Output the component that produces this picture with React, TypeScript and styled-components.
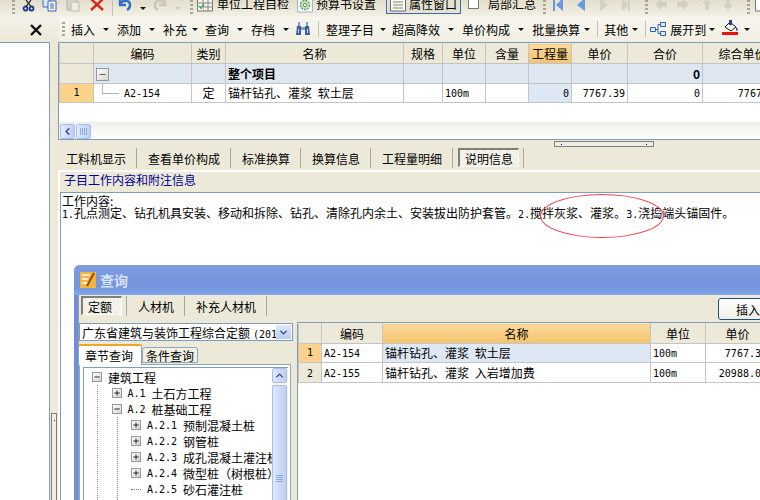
import React from 'react'
import styled, { createGlobalStyle } from 'styled-components'
import { Minus, Plus, ChevronDown, ChevronUp, ChevronLeft } from 'lucide-react'

const GlobalStyle = createGlobalStyle`
  html, body {
    margin: 0;
    padding: 0;
    background: #ece9d8;
  }
  * {
    box-sizing: border-box;
  }
`

const cjk = `"Noto Sans CJK SC", "Liberation Sans", sans-serif`
const mono = `"DejaVu Sans Mono", "Liberation Mono", monospace`

interface Column {
  title: string
  width: number
  hot?: boolean
}

const mainColumns: Column[] = [
  { title: '', width: 34 },
  { title: '编码', width: 98 },
  { title: '类别', width: 34 },
  { title: '名称', width: 178 },
  { title: '规格', width: 39 },
  { title: '单位', width: 43 },
  { title: '含量', width: 43 },
  { title: '工程量', width: 43, hot: true },
  { title: '单价', width: 56 },
  { title: '合价', width: 75 },
  { title: '综合单价', width: 80 },
]

const resultColumns: Column[] = [
  { title: '', width: 23 },
  { title: '编码', width: 61 },
  { title: '名称', width: 268, hot: true },
  { title: '单位', width: 55 },
  { title: '单价', width: 64 },
]

const resultRows = [
  { no: '1', code: 'A2-154', name: '锚杆钻孔、灌浆 软土层', unit: '100m', price: '7767.39', selected: true },
  { no: '2', code: 'A2-155', name: '锚杆钻孔、灌浆 入岩增加费', unit: '100m', price: '20988.03', selected: false },
]

const treeRows = [
  { depth: 0, mark: 'minus', label: '建筑工程' },
  { depth: 1, mark: 'plus', code: 'A.1', label: '土石方工程' },
  { depth: 1, mark: 'minus', code: 'A.2', label: '桩基础工程' },
  { depth: 2, mark: 'plus', code: 'A.2.1', label: '预制混凝土桩' },
  { depth: 2, mark: 'plus', code: 'A.2.2', label: '钢管桩' },
  { depth: 2, mark: 'plus', code: 'A.2.3', label: '成孔混凝土灌注桩' },
  { depth: 2, mark: 'plus', code: 'A.2.4', label: '微型桩（树根桩）' },
  { depth: 2, mark: 'none', code: 'A.2.5', label: '砂石灌注桩' },
  { depth: 2, mark: 'none', code: 'A.2.6', label: '灰土桩' },
]

const App: React.FC = () => (
  <Screen>
    <GlobalStyle />
    <TopBar>
      <Grip $ml={12} />
      <BarIcon $ml={5} viewBox="0 0 16 16">
        <circle cx="5.5" cy="8.5" r="2" fill="none" stroke="#1d3a8c" strokeWidth="1.8" />
        <circle cx="11.5" cy="8.5" r="2" fill="none" stroke="#1d3a8c" strokeWidth="1.8" />
        <path d="M6 6.5 11 0M11 6.5 6 0" stroke="#333" strokeWidth="1.3" />
      </BarIcon>
      <BarIcon $ml={6} viewBox="0 0 16 16">
        <path d="M1 -2h7v9H1z" fill="#dce8fb" stroke="#3b6fc0" />
        <path d="M6 1h8v10H6z" fill="#fff" stroke="#2f5fb0" />
        <path d="M8 4h4M8 6h4M8 8h4" stroke="#2f5fb0" />
      </BarIcon>
      <BarIcon $ml={7} viewBox="0 0 16 16">
        <path d="M2 -2h10v12H2z" fill="#d6d3c5" stroke="#b4b1a4" />
        <path d="M6 2h8v9H6z" fill="#eeece2" stroke="#bdbaae" />
      </BarIcon>
      <BarIcon $ml={8} viewBox="0 0 16 16">
        <path d="M2 -1 14 10M14 -1 2 10" stroke="#d8261c" strokeWidth="2.4" />
      </BarIcon>
      <BarLine $ml={7} />
      <BarIcon $ml={4} viewBox="0 0 16 16">
        <path d="M3 -2v7h6M3 4c3-5 10-4 10 1 0 2-1 4-3 5" fill="none" stroke="#3170c8" strokeWidth="2.4" />
      </BarIcon>
      <Caret $ml={7} />
      <BarIcon $ml={6} viewBox="0 0 16 16">
        <path d="M13 -2v7H7M13 4C10-1 3 0 3 5c0 2 1 4 3 5" fill="none" stroke="#c9c6ba" strokeWidth="2.4" />
      </BarIcon>
      <Caret $ml={7} $muted />
      <Grip $ml={9} />
      <BarIcon $ml={4} viewBox="0 0 16 16">
        <path d="M.5-1h15v12H.5z" fill="#f4f2ea" stroke="#777" />
        <path d="M.5 3h15M.5 7h15M6 -1v12M11 -1v12" stroke="#888" />
        <path d="M1 4h5v6H1z" fill="#fff" />
        <path d="M2 6l2 2 3-4" fill="none" stroke="#3da23a" strokeWidth="1.6" />
      </BarIcon>
      <TopLabel $ml={4}>单位工程自检</TopLabel>
      <BarIcon $ml={8} viewBox="0 0 16 16">
        <path d="M.5-2h15v14H.5z" fill="#f4f7fb" stroke="#9db4d8" />
        <circle cx="8" cy="5" r="4.5" fill="#cfe8c4" stroke="#5c9a56" strokeWidth="1.4" strokeDasharray="2 1" />
        <circle cx="8" cy="5" r="1.8" fill="#fff" stroke="#5c9a56" />
      </BarIcon>
      <TopLabel $ml={3}>预算书设置</TopLabel>
      <PressedButton>
        <BarIcon viewBox="0 0 16 16">
          <path d="M.5-2h15v13H.5z" fill="#fff" stroke="#666" />
          <path d="M3 2h10M3 5h10M3 8h10" stroke="#6b8a5c" />
        </BarIcon>
        <TopLabel $ml={3}>属性窗口</TopLabel>
      </PressedButton>
      <CheckMark />
      <TopLabel $ml={9}>局部汇总</TopLabel>
      <Grip $ml={7} />
      <BarIcon $ml={6} viewBox="0 0 16 16">
        <path d="M1 -2h2v13H1zM11 -2v13L4 5z" fill="#6b97dc" />
      </BarIcon>
      <BarIcon $ml={6} viewBox="0 0 16 16">
        <path d="M11 -2v13L3 5z" fill="#6b97dc" />
      </BarIcon>
      <BarIcon $ml={6} viewBox="0 0 16 16">
        <path d="M4 -2v13l8-6z" fill="#d3d0c4" />
      </BarIcon>
      <BarIcon $ml={6} viewBox="0 0 16 16">
        <path d="M12 -2h-2v13h2zM4 -2v13l7-6z" fill="#d3d0c4" />
      </BarIcon>
      <Grip $ml={11} />
      <BarIcon $ml={5} viewBox="0 0 16 16">
        <path d="M2 4 8-1v3h6v5H8v3z" fill="#d3d0c4" />
      </BarIcon>
      <BarIcon $ml={6} viewBox="0 0 16 16">
        <path d="M14 4 8-1v3H2v5h6v3z" fill="#d3d0c4" />
      </BarIcon>
      <BarIcon $ml={8} viewBox="0 0 16 16">
        <path d="M8 -1 13 4H10v6H6V4H3z" fill="#d3d0c4" />
      </BarIcon>
      <BarIcon $ml={5} viewBox="0 0 16 16">
        <path d="M8 10 13 5H10V-1H6v6H3z" fill="#d3d0c4" />
      </BarIcon>
      <Grip $ml={11} />
      <BarIcon $ml={5} viewBox="0 0 16 16">
        <path d="M.5-1h15v12H.5z" fill="#fff" stroke="#777" />
      </BarIcon>
    </TopBar>

    <SecondRow>
      <CloseSlot>
        <svg width="14" height="14" viewBox="0 0 14 14">
          <path d="M2 2 12 12M12 2 2 12" stroke="#111" strokeWidth="2.4" />
        </svg>
      </CloseSlot>
      <ActionBar>
        <Grip $ml={3} />
        <Action $ml={6}>插入</Action><Caret $ml={8} />
        <Action $ml={8}>添加</Action><Caret $ml={8} />
        <Action $ml={8}>补充</Action><Caret $ml={5} />
        <Action $ml={7}>查询</Action><Caret $ml={8} />
        <Action $ml={8}>存档</Action><Caret $ml={8} />
        <BarIcon $ml={6} viewBox="0 0 16 16">
          <path d="M2 5h4v9H1zM10 5h4l1 9h-5z" fill="#3d5fa8" />
          <path d="M3 1h2v4H3zM11 1h2v4h-2zM6 6h4v3H6z" fill="#7f9bd0" />
          <path d="M3 8h1v4H3zM12 8h1v4h-1z" fill="#c6d4ee" />
        </BarIcon>
        <BarLine $ml={7} />
        <Action $ml={7}>整理子目</Action><Caret $ml={6} />
        <Action $ml={6}>超高降效</Action><Caret $ml={8} />
        <Action $ml={8}>单价构成</Action><Caret $ml={8} />
        <Action $ml={8}>批量换算</Action><Caret $ml={4} />
        <BarLine $ml={7} />
        <Action $ml={6}>其他</Action><Caret $ml={4} />
        <BarLine $ml={7} />
        <BarIcon $ml={4} viewBox="0 0 16 16">
          <path d="M.5 6.5h5v4h-5zM10.5 1.500h5v4h-5zM10.5 10.500h5v4h-5z" fill="#dce8fb" stroke="#2f62b0" />
          <path d="M5.5 8.500h2.500v-5h2.500M8 8.500v4h2.500" fill="none" stroke="#2f62b0" />
        </BarIcon>
        <Action $ml={4}>展开到</Action><Caret $ml={3} />
        <PaintIcon viewBox="0 0 18 18">
          <path d="M3 7 8 2l6 5-5 4z" fill="#f3f1e8" stroke="#222" />
          <path d="M7 0h3v5H7z" fill="#27408b" />
          <path d="M14 7c2 1 2 4 1 4s-1-2-1-4z" fill="#27408b" />
          <path d="M0 12h16v3H0z" fill="#f01010" />
        </PaintIcon>
        <Caret $ml={4} />
      </ActionBar>
    </SecondRow>

    <Workspace>
      <LeftPane />
      <Gutter>
        <VHandle />
      </Gutter>
      <MainPane>
        <GridFrame>
          <GridTable>
            <colgroup>
              {mainColumns.map((col, i) => <col key={i} style={{ width: col.width }} />)}
            </colgroup>
            <thead>
              <tr>
                {mainColumns.map((col, i) => (
                  <HeadCell key={i} $hot={col.hot}>{col.title}</HeadCell>
                ))}
              </tr>
            </thead>
            <tbody>
              <tr>
                <HeadCell />
                <GroupCell><TreeBox $size={13}><Minus size={9} strokeWidth={1.6} /></TreeBox></GroupCell>
                <GroupCell />
                <GroupCell $bold>整个项目</GroupCell>
                <GroupCell />
                <GroupCell />
                <GroupCell />
                <GroupCell />
                <GroupCell />
                <GroupCell $bold $right>0</GroupCell>
                <GroupCell />
              </tr>
              <tr>
                <NumberCell>1</NumberCell>
                <Cell>
                  <TreeTick />
                  <CodeInTree>A2-154</CodeInTree>
                </Cell>
                <Cell $center>定</Cell>
                <Cell>锚杆钻孔、灌浆 软土层</Cell>
                <Cell />
                <Cell><Latin>100m</Latin></Cell>
                <Cell />
                <Cell $right $tint><Latin>0</Latin></Cell>
                <Cell $right><Latin>7767.39</Latin></Cell>
                <Cell $right><Latin>0</Latin></Cell>
                <Cell $right><Latin>7767.39</Latin></Cell>
              </tr>
            </tbody>
          </GridTable>
          <HScroll>
            <ScrollThumb><ChevronLeft size={11} strokeWidth={3} color="#2c4a8a" /></ScrollThumb>
            <ScrollThumb><GripBars /></ScrollThumb>
          </HScroll>
        </GridFrame>

        <SplitHandle />

        <TabStrip>
          <Tab>工料机显示</Tab>
          <Tab>查看单价构成</Tab>
          <Tab>标准换算</Tab>
          <Tab>换算信息</Tab>
          <Tab>工程量明细</Tab>
          <Tab $active><TabFace>说明信息</TabFace></Tab>
        </TabStrip>

        <NotePanel>
          <NoteTitle>子目工作内容和附注信息</NoteTitle>
          <NoteBody>
            工作内容:
            <br />
            <Latin>1.</Latin>孔点测定、钻孔机具安装、移动和拆除、钻孔、清除孔内余土、安装拔出防护套管。<Latin>2.</Latin>搅拌灰浆、灌浆。<Latin>3.</Latin>浇捣端头锚固件。
            <RedCircle />
          </NoteBody>
        </NotePanel>
      </MainPane>
    </Workspace>

    <Dialog>
      <DialogTitle>
        <svg width="16" height="16" viewBox="0 0 16 16">
          <path d="M0 0h16v16H0z" fill="#f3b63c" />
          <path d="M2 3h8M2 7h6M2 11h7" stroke="#fff" strokeWidth="1.5" />
          <path d="M14 1 7 14" stroke="#a8401c" strokeWidth="2" />
        </svg>
        查询
      </DialogTitle>
      <DialogBody>
        <DialogTabs>
          <Tab $active><TabFace>定额</TabFace></Tab>
          <Tab>人材机</Tab>
          <Tab>补充人材机</Tab>
          <InsertButton>插入</InsertButton>
        </DialogTabs>
        <DialogColumns>
          <TreeSide>
            <Combo>
              <ComboText>广东省建筑与装饰工程综合定额<ComboYear>(2018)</ComboYear></ComboText>
              <ComboArrow><ChevronDown size={11} strokeWidth={3} color="#2c4a8a" /></ComboArrow>
            </Combo>
            <TreeTabs>
              <TreeTab $active>章节查询</TreeTab>
              <TreeTab>条件查询</TreeTab>
            </TreeTabs>
            <TreeFrame>
              <TreeList>
                {treeRows.map((row, i) => (
                  <TreeRow key={i} $depth={row.depth}>
                    {row.mark === 'none' ? (
                      <TreeDash />
                    ) : (
                      <TreeBox $size={10}>
                        {row.mark === 'plus' ? <Plus size={8} strokeWidth={2.4} /> : <Minus size={8} strokeWidth={2.4} />}
                      </TreeBox>
                    )}
                    {row.code && <TreeCode>{row.code}</TreeCode>}
                    <TreeLabel>{row.label}</TreeLabel>
                  </TreeRow>
                ))}
              </TreeList>
              <VScroll>
                <ScrollBtn><ChevronUp size={11} strokeWidth={3} color="#2c4a8a" /></ScrollBtn>
                <VThumb><GripBarsFlat /></VThumb>
              </VScroll>
            </TreeFrame>
          </TreeSide>
          <ResultSide>
            <GridTable>
              <colgroup>
                {resultColumns.map((col, i) => <col key={i} style={{ width: col.width }} />)}
              </colgroup>
              <thead>
                <tr>
                  {resultColumns.map((col, i) => (
                    <HeadCell key={i} $hot={col.hot}>{col.title}</HeadCell>
                  ))}
                </tr>
              </thead>
              <tbody>
                {resultRows.map(row => (
                  <tr key={row.no}>
                    {row.selected ? <NumberCell>{row.no}</NumberCell> : <HeadCell><Latin>{row.no}</Latin></HeadCell>}
                    <Cell><Latin>{row.code}</Latin></Cell>
                    <Cell $tint={row.selected}>{row.name}</Cell>
                    <Cell><Latin>{row.unit}</Latin></Cell>
                    <Cell $right><Latin>{row.price}</Latin></Cell>
                  </tr>
                ))}
              </tbody>
            </GridTable>
          </ResultSide>
        </DialogColumns>
      </DialogBody>
    </Dialog>
  </Screen>
)

const Screen = styled.div`
  position: relative;
  width: 760px;
  height: 500px;
  overflow: hidden;
  background: #ece9d8;
  font-family: ${cjk};
  font-size: 12px;
  color: #000;
`

const TopBar = styled.div`
  display: flex;
  align-items: flex-start;
  height: 17px;
  overflow: hidden;
  background: linear-gradient(#e3dfcc, #f3f1e6);
  line-height: 12px;
`

const BarIcon = styled.svg<{ $ml?: number }>`
  width: 16px;
  height: 16px;
  flex: none;
  overflow: hidden;
  margin-left: ${props => props.$ml || 0}px;
`

const PaintIcon = styled.svg`
  width: 18px;
  height: 18px;
  flex: none;
  margin-left: 7px;
`

const Grip = styled.span<{ $ml: number }>`
  width: 3px;
  height: 14px;
  margin-left: ${props => props.$ml}px;
  flex: none;
  background: repeating-linear-gradient(#a8a595 0 2px, transparent 2px 4px);
`

const BarLine = styled.span<{ $ml: number }>`
  width: 1px;
  height: 16px;
  margin-left: ${props => props.$ml}px;
  flex: none;
  background: #c5c2b2;
`

const Caret = styled.span<{ $ml: number; $muted?: boolean }>`
  width: 0;
  height: 0;
  flex: none;
  margin-left: ${props => props.$ml}px;
  align-self: center;
  border-left: 3px solid transparent;
  border-right: 3px solid transparent;
  border-top: 3px solid ${props => (props.$muted ? '#c9c6ba' : '#111')};
`

const TopLabel = styled.span<{ $ml: number }>`
  margin-top: -2px;
  margin-left: ${props => props.$ml}px;
  white-space: nowrap;
  flex: none;
`

const PressedButton = styled.span`
  display: flex;
  flex: none;
  width: 75px;
  height: 14px;
  padding-left: 3px;
  margin-left: 10px;
  overflow: hidden;
  border: 1px solid #3d6ab0;
  border-top: 0;
  background: #e4e1d0;
`

const CheckMark = styled.span`
  width: 11px;
  height: 9px;
  margin-left: 7px;
  flex: none;
  border: 1px solid #777;
  border-top: 0;
  background: #fff;
`

const SecondRow = styled.div`
  display: flex;
  height: 25px;
  background: linear-gradient(#f4f2e8, #ebe8d8);
`

const CloseSlot = styled.div`
  width: 59px;
  display: flex;
  align-items: center;
  padding-left: 29px;
  flex: none;
`

const ActionBar = styled.div`
  display: flex;
  align-items: center;
  flex: 1;
  min-width: 0;
  padding-bottom: 1px;
  background: linear-gradient(#f8f7f0, #f1efe3);
  border-radius: 3px 0 0 3px;
  white-space: nowrap;
`

const Action = styled.span<{ $ml: number }>`
  margin-left: ${props => props.$ml}px;
  flex: none;
`

const Workspace = styled.div`
  display: flex;
  height: 458px;
`

const LeftPane = styled.div`
  width: 50px;
  flex: none;
  background: #fff;
  border-right: 1px solid #7f9db9;
  border-top: 1px solid #7f9db9;
`

const Gutter = styled.div`
  width: 8px;
  flex: none;
`

const VHandle = styled.div`
  width: 6px;
  height: 200px;
  margin: 371px 0 0 1px;
  border: 1px solid #808080;
  background: linear-gradient(#0000c0, #0000c0) 2px 6px / 1px 1px no-repeat, #f0eee4;
`

const MainPane = styled.div`
  flex: 1;
  min-width: 0;
  display: flex;
  flex-direction: column;
  overflow: hidden;
`

const GridFrame = styled.div`
  height: 98px;
  flex: none;
  overflow: hidden;
  background: #fff;
  border: 1px solid #7f9db9;
  border-right: 0;
  position: relative;
`

const GridTable = styled.table`
  table-layout: fixed;
  border-collapse: collapse;
  width: 0;
`

const HeadCell = styled.td<{ $hot?: boolean }>`
  height: 20px;
  padding: 0;
  text-align: center;
  font-weight: 400;
  overflow: hidden;
  white-space: nowrap;
  line-height: 12px;
  background: ${props => (props.$hot ? 'linear-gradient(#fbd99b, #f3c46b)' : '#ece9d8')};
  border: 1px solid #c4c4c4;
  border-top-color: #ece9d8;
`

const GroupCell = styled.td<{ $bold?: boolean; $right?: boolean }>`
  height: 19px;
  padding: 0 2px;
  overflow: hidden;
  white-space: nowrap;
  line-height: 12px;
  background: #dee6f0;
  font-weight: ${props => (props.$bold ? 700 : 400)};
  text-align: ${props => (props.$right ? 'right' : 'left')};
  border: 1px solid #c4c4c4;
`

const Cell = styled.td<{ $right?: boolean; $center?: boolean; $tint?: boolean }>`
  position: relative;
  height: 19px;
  padding: 0 2px;
  overflow: hidden;
  white-space: nowrap;
  line-height: 12px;
  word-spacing: 3px;
  background: ${props => (props.$tint ? '#dee8f5' : '#fff')};
  text-align: ${props => (props.$right ? 'right' : props.$center ? 'center' : 'left')};
  border: 1px solid #c4c4c4;
`

const NumberCell = styled.td`
  height: 19px;
  padding: 0;
  text-align: center;
  line-height: 12px;
  font-family: ${mono};
  font-size: 10px;
  background: #fdd28a;
  border: 1px solid #c4c4c4;
`

const Latin = styled.span`
  font-family: ${mono};
  font-size: 10px;
  color: #000;
`

const TreeBox = styled.span<{ $size: number }>`
  display: inline-flex;
  align-items: center;
  justify-content: center;
  width: ${props => props.$size}px;
  height: ${props => props.$size}px;
  flex: none;
  background: linear-gradient(135deg, #fff, #d8d5c8);
  border: 1px solid #8f9aa8;
  color: #000;
  vertical-align: middle;
`

const TreeTick = styled.span`
  position: absolute;
  left: 8px;
  top: 0;
  width: 17px;
  height: 10px;
  border-left: 1px solid #b4b4b4;
  border-bottom: 1px solid #b4b4b4;
`

const CodeInTree = styled(Latin)`
  margin-left: 28px;
`

const HScroll = styled.div`
  position: absolute;
  left: 0;
  right: 0;
  bottom: 0;
  height: 17px;
  display: flex;
  gap: 1px;
  padding: 1px;
  background: linear-gradient(#f0f0ea, #fff);
  border-top: 1px solid #eee;
`

const ScrollThumb = styled.span`
  width: 15px;
  height: 15px;
  display: flex;
  align-items: center;
  justify-content: center;
  background: linear-gradient(90deg, #e3ebfb, #bdcff3);
  border: 1px solid #a9bee8;
  border-radius: 2px;
`

const GripBars = styled.span`
  width: 7px;
  height: 7px;
  background: repeating-linear-gradient(90deg, #8ea8dc 0 1px, transparent 1px 2px);
`

const GripBarsFlat = styled.span`
  width: 7px;
  height: 7px;
  background: repeating-linear-gradient(#8ea8dc 0 1px, transparent 1px 2px);
`

const SplitHandle = styled.div`
  width: 100px;
  height: 6px;
  margin: 1px 0 0 496px;
  flex: none;
  border: 1px solid #808080;
  background:
    linear-gradient(#0000c0, #0000c0) 6px 2px / 1px 1px no-repeat,
    linear-gradient(#0000c0, #0000c0) 91px 2px / 1px 1px no-repeat,
    #f0eee4;
`

const TabStrip = styled.div`
  display: flex;
  height: 20px;
  margin: 1px 0 0 -3px;
  flex: none;
`

const Tab = styled.span<{ $active?: boolean }>`
  height: 20px;
  padding: ${props => (props.$active ? '0 4px 0 5px' : '0 10px 0 11px')};
  display: flex;
  align-items: center;
  flex: none;
  white-space: nowrap;
  border-right: 1px solid #aca899;
`

const TabFace = styled.span`
  height: 19px;
  min-width: 41px;
  align-self: flex-start;
  padding-left: 5px;
  padding-right: 5px;
  display: flex;
  align-items: center;
  border: 1px solid #fff;
  border-top: 2px solid #7f7f78;
  border-left: 2px solid #7f7f78;
  background: repeating-conic-gradient(#ece9d8 0 25%, #fff 0 50%) 0 0 / 2px 2px;
`

const NotePanel = styled.div`
  flex: 1;
  margin-top: 2px;
  padding: 2px 0 0 2px;
  background: #fff;
  display: flex;
  flex-direction: column;
`

const NoteTitle = styled.div`
  height: 20px;
  flex: none;
  padding-left: 4px;
  line-height: 16px;
  background: #ece9d8;
  color: #000090;
`

const NoteBody = styled.div`
  position: relative;
  flex: 1;
  background: #fff;
  border-top: 1px solid #7f9db9;
  border-left: 1px solid #7f9db9;
  padding: 2px 0 0 1px;
  line-height: 12px;
  white-space: nowrap;
`

const RedCircle = styled.span`
  position: absolute;
  left: 479px;
  top: 1px;
  width: 124px;
  height: 44px;
  border: 1px solid #f0404a;
  border-radius: 50%;
`

const Dialog = styled.div`
  position: absolute;
  left: 74px;
  top: 265px;
  width: 720px;
  height: 300px;
  border-radius: 6px 6px 0 0;
  background: #6f8fdc;
  padding-left: 4px;
`

const DialogTitle = styled.div`
  height: 30px;
  display: flex;
  align-items: center;
  gap: 4px;
  margin-left: -4px;
  padding-left: 6px;
  color: #d8e2f8;
  font-weight: 700;
  font-size: 14px;
  background: linear-gradient(#7f9ce0, #7394dd 70%, #82a8e8);
  border-radius: 6px 6px 0 0;
`

const DialogBody = styled.div`
  height: 100%;
  background: #ece9d8;
  border-left: 1px solid #9d9d9d;
`

const DialogTabs = styled.div`
  display: flex;
  align-items: flex-start;
  height: 28px;
  padding-top: 1px;
  margin-left: -3px;
`

const InsertButton = styled.button`
  width: 70px;
  height: 22px;
  margin: 2px 0 0 451px;
  flex: none;
  font: inherit;
  padding: 0 0 0 5px;
  text-align: left;
  text-indent: 12px;
  background: linear-gradient(#fff, #f0efe6);
  border: 1px solid #1f4f80;
  border-radius: 3px;
`

const DialogColumns = styled.div`
  display: flex;
  gap: 4px;
`

const TreeSide = styled.div`
  width: 214px;
  flex: none;
`

const Combo = styled.div`
  display: flex;
  align-items: center;
  height: 18px;
  background: #fff;
  border: 1px solid #7f9db9;
`

const ComboText = styled.span`
  flex: 1;
  min-width: 0;
  padding-left: 2px;
  overflow: hidden;
  white-space: nowrap;
`

const ComboYear = styled(Latin)`
  margin-left: 3px;
`

const ComboArrow = styled.span`
  width: 15px;
  height: 14px;
  margin-right: 1px;
  display: flex;
  align-items: center;
  justify-content: center;
  flex: none;
  background: linear-gradient(#dfe8fb, #b9ccf2);
`

const TreeTabs = styled.div`
  display: flex;
  align-items: flex-end;
  height: 20px;
  margin: 3px 0 0 -1px;
`

const TreeTab = styled.span<{ $active?: boolean }>`
  height: ${props => (props.$active ? '21px' : '16px')};
  margin-bottom: ${props => (props.$active ? '-1px' : '1px')};
  position: relative;
  padding: ${props => (props.$active ? '0 8px 0 6px' : '0 3px')};
  display: flex;
  align-items: center;
  white-space: nowrap;
  background: ${props => (props.$active ? '#fff' : '#f2f0e6')};
  border: 1px solid #91a7b4;
  border-top: ${props => (props.$active ? '2px solid #f4a51e' : '1px solid #91a7b4')};
  border-bottom: ${props => (props.$active ? '0' : '1px solid #91a7b4')};
  border-radius: 3px 3px 0 0;
`

const TreeFrame = styled.div`
  display: flex;
  width: 212px;
  height: 210px;
  padding: 2px 2px 2px 3px;
  background: #fff;
  border: 1px solid #91a7b4;
`

const TreeList = styled.div`
  flex: 1;
  min-width: 0;
  overflow: hidden;
  border: 1px solid #7f9db9;
  border-right: 0;
  padding-top: 1px;
`

const TreeRow = styled.div<{ $depth: number }>`
  display: flex;
  align-items: center;
  height: 16px;
  padding-left: ${props => 8 + props.$depth * 19.5}px;
  white-space: nowrap;
  background:
    ${props => (props.$depth >= 1 ? 'repeating-linear-gradient(#909090 0 1px, transparent 1px 2px) 13px 0 / 1px 100% no-repeat' : 'none')},
    ${props => (props.$depth >= 2 ? 'repeating-linear-gradient(#909090 0 1px, transparent 1px 2px) 33px 0 / 1px 100% no-repeat' : 'none')};
`

const TreeLabel = styled.span`
  margin-left: 6px;
`

const TreeDash = styled.span`
  width: 10px;
  flex: none;
  border-bottom: 1px dotted #808080;
`

const TreeCode = styled.span`
  font-family: ${mono};
  font-size: 10px;
  margin-left: 6px;
`

const VScroll = styled.div`
  width: 16px;
  flex: none;
  background: #f4f3ec;
  display: flex;
  flex-direction: column;
  gap: 2px;
  padding-right: 1px;
  border-top: 1px solid #7f9db9;
`

const ScrollBtn = styled.span`
  height: 15px;
  flex: none;
  display: flex;
  align-items: center;
  justify-content: center;
  background: linear-gradient(90deg, #dfe8fb, #bdcff3);
  border: 1px solid #a9bee8;
  border-radius: 2px;
`

const VThumb = styled.span`
  flex: 1;
  display: flex;
  align-items: center;
  justify-content: center;
  background: linear-gradient(90deg, #dfe8fb, #bdcff3);
  border: 1px solid #a9bee8;
  border-radius: 2px;
`

const ResultSide = styled.div`
  flex: 1;
  min-width: 0;
  height: 240px;
  margin-top: -1px;
  background: #fff;
  border: 1px solid #7f9db9;
  overflow: hidden;
`

export default App
